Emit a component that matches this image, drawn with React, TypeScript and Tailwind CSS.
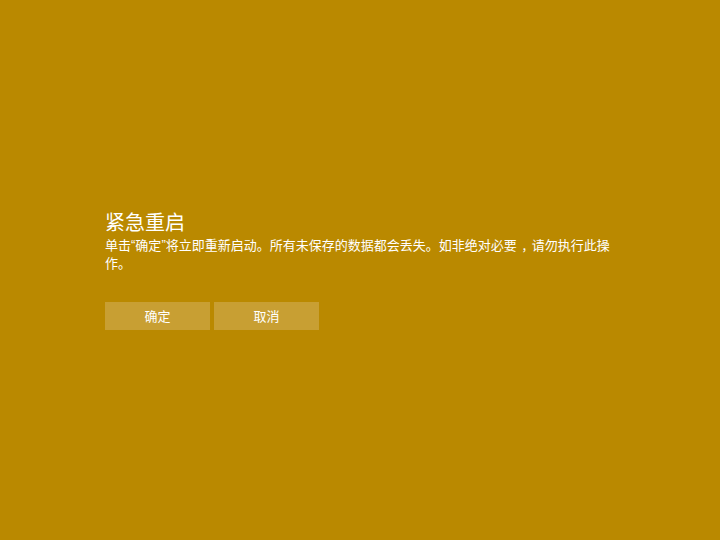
const font = "font-['Microsoft_YaHei','Noto_Sans_CJK_SC',sans-serif]";
const narrow = "font-['Liberation_Sans',sans-serif] align-top";

const App = () => {
  return (
    <div className={`w-[720px] h-[540px] bg-[#ba8900] text-white ${font}`}>
      <div className="pt-[208px] pl-[105px]">
        <h1 className="text-[20px] leading-[28px]">紧急重启</h1>
        <p className="w-[515px] text-[13px] leading-[18px]">
          单击<span className={narrow}>“</span>确定<span className={narrow}>”</span>
          将立即重新启动。所有未保存的数据都会丢失。如非绝对必要
          <span className="inline-block w-[15px] text-center align-top">,</span>
          请勿执行此操作。
        </p>
        <div className="mt-[30px] flex gap-[4px]">
          <button className="w-[105px] h-[28px] bg-[#c89f33] text-[13px]">确定</button>
          <button className="w-[105px] h-[28px] bg-[#c89f33] text-[13px]">取消</button>
        </div>
      </div>
    </div>
  );
};

export default App;
